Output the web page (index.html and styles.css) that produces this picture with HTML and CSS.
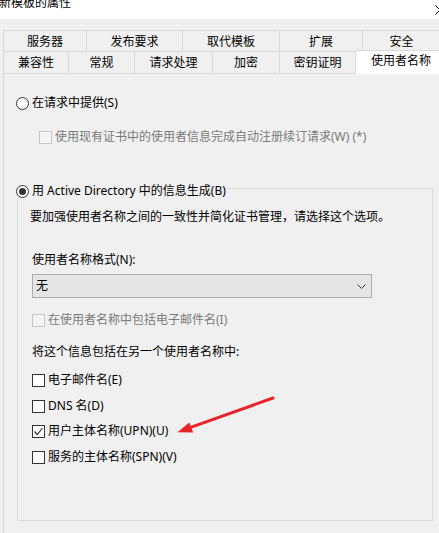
FILE: index.html
```html
<!DOCTYPE html>
<html lang="zh-CN">
<head>
<meta charset="utf-8">
<title>新模板的属性</title>
<link rel="stylesheet" href="styles.css">
</head>
<body>
<div class="titlebar">
  <span class="title">新模板的属性</span>
  <svg class="close" width="10" height="10" viewBox="0 0 10 10"><path d="M0.5 0.5 L9.5 9.5 M9.5 0.5 L0.5 9.5" stroke="#000" stroke-width="1"/></svg>
</div>

<div class="tabs">
  <div class="tabrow row1">
    <div class="tab first t1">服务器</div>
    <div class="tab t2">发布要求</div>
    <div class="tab t3">取代模板</div>
    <div class="tab t4">扩展</div>
    <div class="tab t5">安全</div>
  </div>
  <div class="tabrow row2">
    <div class="tab first u1">兼容性</div>
    <div class="tab u2">常规</div>
    <div class="tab u3">请求处理</div>
    <div class="tab u4">加密</div>
    <div class="tab u5">密钥证明</div>
    <div class="tab active">使用者名称</div>
  </div>
</div>

<div class="page">
  <div class="opt">
    <span class="radio"></span><span>在请求中提供(S)</span>
  </div>
  <div class="opt disabled renew">
    <span class="box"></span><span>使用现有证书中的使用者信息完成自动注册续订请求(W) (*)</span>
  </div>

  <fieldset class="group">
    <legend class="legend">
      <span class="opt"><span class="radio on"></span><span>用 Active Directory 中的信息生成(B)</span></span>
    </legend>
    <div class="desc">要加强使用者名称之间的一致性并简化证书管理，请选择这个选项。</div>
    <div class="label">使用者名称格式(N):</div>
    <div class="select"><span>无</span>
      <svg class="chev" width="9" height="5" viewBox="0 0 9 5"><path d="M0.5 0.5 L4.5 4.5 L8.5 0.5" fill="none" stroke="#333" stroke-width="1"/></svg>
    </div>
    <div class="opt disabled incl">
      <span class="box"></span><span>在使用者名称中包括电子邮件名(I)</span>
    </div>
    <div class="label alt">将这个信息包括在另一个使用者名称中:</div>
    <div class="opt c1"><span class="box"></span><span>电子邮件名(E)</span></div>
    <div class="opt c2"><span class="box"></span><span>DNS 名(D)</span></div>
    <div class="opt c3"><span class="box checked">
      <svg width="11" height="11" viewBox="0 0 11 11"><path d="M1.5 5.5 L4.3 8.5 L9.5 2" fill="none" stroke="#333" stroke-width="1.2"/></svg>
    </span><span>用户主体名称(UPN)(U)</span></div>
    <div class="opt c4"><span class="box"></span><span>服务的主体名称(SPN)(V)</span></div>
  </fieldset>
</div>

<svg class="annot" width="439" height="533" viewBox="0 0 439 533">
  <line x1="273" y1="398" x2="190" y2="427.6" stroke="#e8232b" stroke-width="3" stroke-linecap="round"/>
  <polygon points="177.5,432.2 193.2,432.4 189.3,422.4" fill="#e8232b"/>
</svg>
</body>
</html>
```

FILE: styles.css
```css
* { box-sizing: border-box; }

html, body {
  margin: 0;
  padding: 0;
}

body {
  width: 439px;
  height: 533px;
  overflow: hidden;
  background: #f0f0f0;
  font-family: "Noto Sans", "Noto Sans CJK SC", sans-serif;
  font-size: 12px;
  line-height: 16px;
  color: #000;
  position: relative;
}

.titlebar {
  height: 19px;
  background: #fff;
  display: flex;
  justify-content: space-between;
  align-items: flex-start;
  overflow: hidden;
}

.title {
  display: block;
  margin-top: -5px;
  margin-left: -1px;
  white-space: nowrap;
}

.close {
  margin-top: 5px;
  margin-right: -6px;
  flex: none;
}

.tabs {
  margin-top: 11px;
  margin-left: 3px;
}

.tabrow {
  display: flex;
  white-space: nowrap;
}

.row1 { height: 21px; }
.row2 { height: 22px; }

.tab {
  flex: none;
  border-top: 1px solid #d9d9d9;
  border-right: 1px solid #d9d9d9;
  background: #f0f0f0;
  text-align: center;
  padding-top: 3px;
}

.tab.first { border-left: 1px solid #d9d9d9; }

.t1 { width: 84px; }
.t2 { width: 96px; }
.t3 { width: 97px; }
.t4 { width: 83px; }
.t5 { width: 78px; }

.u1 { width: 66px; }
.u2 { width: 66px; }
.u3 { width: 78px; }
.u4 { width: 67px; }
.u5 { width: 76px; }

.tab.active {
  width: 92px;
  height: 24px;
  margin-top: -1px;
  margin-left: -1px;
  border-left: 1px solid #d9d9d9;
  background: #fff;
  padding-top: 2px;
  position: relative;
  z-index: 1;
}

.page {
  margin-left: 3px;
  margin-right: -10px;
  height: 470px;
  border-top: 1px solid #d9d9d9;
  border-left: 1px solid #d9d9d9;
  padding: 21px 0 0 12px;
}

.opt {
  display: flex;
  align-items: center;
  height: 16px;
  gap: 3px;
  white-space: nowrap;
}

.radio {
  flex: none;
  width: 13px;
  height: 13px;
  border: 1px solid #333;
  border-radius: 50%;
  background: #fff;
  display: flex;
  align-items: center;
  justify-content: center;
}

.radio.on::after {
  content: "";
  width: 7px;
  height: 7px;
  border-radius: 50%;
  background: #333;
}

.box {
  flex: none;
  width: 13px;
  height: 13px;
  border: 1px solid #333;
  background: #fff;
  display: flex;
  align-items: center;
  justify-content: center;
}

.disabled { color: #7a7a7a; }
.disabled .box {
  border-color: #c8c8c8;
  background: #f4f4f4;
}

.renew {
  margin-top: 18px;
  margin-left: 23px;
}

.group {
  margin: 32px 0 0 1px;
  width: 416px;
  padding: 0 0 55px 14px;
  border: 1px solid #dcdcdc;
  min-inline-size: 0;
}

.legend {
  padding: 6px 1px 0 0;
  margin-left: -16px;
}

.desc {
  margin-top: 10px;
  margin-left: -2px;
  white-space: nowrap;
}

.label {
  margin-top: 27px;
  white-space: nowrap;
}

.select {
  margin-top: 6px;
  width: 340px;
  height: 24px;
  border: 1px solid #adadad;
  background: #e5e5e5;
  display: flex;
  align-items: center;
  justify-content: space-between;
  padding: 0 5px 0 3px;
}

.chev { flex: none; margin-top: 1px; }

.incl { margin-top: 14px; }
.label.alt { margin-top: 16px; }
.c1 { margin-top: 12px; }
.c2 { margin-top: 10px; }
.c3 { margin-top: 9px; }
.c4 { margin-top: 10px; }

.annot {
  position: absolute;
  left: 0;
  top: 0;
  pointer-events: none;
}
```
